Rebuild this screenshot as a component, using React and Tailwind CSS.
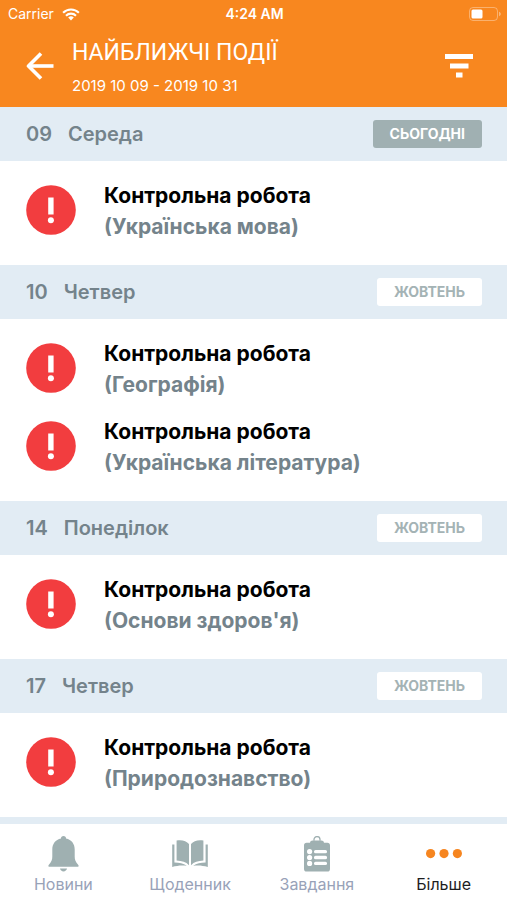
import { useState } from 'react'

const DAYS = [
  { date: '09', weekday: 'Середа', badge: 'СЬОГОДНІ', today: true, events: ['Українська мова'] },
  { date: '10', weekday: 'Четвер', badge: 'ЖОВТЕНЬ', events: ['Географія', 'Українська література'] },
  { date: '14', weekday: 'Понеділок', badge: 'ЖОВТЕНЬ', events: ["Основи здоров'я"] },
  { date: '17', weekday: 'Четвер', badge: 'ЖОВТЕНЬ', events: ['Природознавство'] },
]

const TABS = [
  { id: 'news', label: 'Новини', Icon: BellIcon },
  { id: 'diary', label: 'Щоденник', Icon: BookIcon },
  { id: 'tasks', label: 'Завдання', Icon: ClipboardIcon },
  { id: 'more', label: 'Більше', Icon: DotsIcon },
]

function WifiIcon() {
  return (
    <svg viewBox="0 0 18 13" className="h-[13px] w-[18px]" fill="none" stroke="currentColor" strokeWidth="2.1" aria-hidden="true">
      <path d="M1.1 4.7a11.3 11.3 0 0 1 15.8 0" />
      <path d="M4 7.7a7.1 7.1 0 0 1 10 0" />
      <path d="M9 12.4 6.2 9.6a4 4 0 0 1 5.6 0z" fill="currentColor" stroke="none" />
    </svg>
  )
}

function BatteryIcon() {
  return (
    <svg viewBox="0 0 32 14" className="h-[14px] w-8" aria-hidden="true">
      <rect x="0.5" y="0.5" width="28" height="13" rx="3.5" fill="none" stroke="#fff" strokeOpacity="0.35" />
      <rect x="2.5" y="2.5" width="11" height="9" rx="1.5" fill="#fff" />
      <path d="M30 4.8c1.2.4 1.8 1.2 1.8 2.2s-.6 1.8-1.8 2.2z" fill="#fff" fillOpacity="0.4" />
    </svg>
  )
}

function BackIcon() {
  return (
    <svg viewBox="0 0 28 28" className="size-7" fill="none" stroke="currentColor" strokeWidth="3.6" aria-hidden="true">
      <path d="M27.500 14H3" />
      <path d="M15 1.500 2.500 14 15 26.500" strokeLinejoin="round" />
    </svg>
  )
}

function FilterIcon() {
  return (
    <svg viewBox="0 0 28 24" className="h-6 w-7" fill="currentColor" aria-hidden="true">
      <path d="M0 0h28v5H0zM5 9.500h18.500v5H5zM11 18.500h6.500v5H11z" />
    </svg>
  )
}

function AlertIcon() {
  return (
    <svg viewBox="0 0 50 50" className="size-[50px] shrink-0" aria-hidden="true">
      <circle cx="25" cy="25" r="24.800" fill="#f23d3f" />
      <path d="M22.200 12.500h5.400v17h-5.400z" fill="#fff" />
      <circle cx="24.900" cy="35.200" r="3" fill="#fff" />
    </svg>
  )
}

function BellIcon() {
  return (
    <svg viewBox="0 0 36 36" className="size-9" fill="currentColor" aria-hidden="true">
      <path d="M18.500 0c1.500 0 2.700 1.200 2.500 2.600 5.600 1.200 8.700 5.400 8.700 11v7c0 3 .8 5.500 3.600 8.300.8 1 .2 1.800-.8 1.800H4.500c-1 0-1.600-.8-.8-1.800 2.800-2.800 3.600-5.300 3.600-8.300v-7c0-5.600 3.100-9.800 8.700-11C15.800 1.200 17 0 18.500 0z" />
      <path d="M15 32.600h7c-.4 1.700-1.700 2.900-3.500 2.900s-3.100-1.200-3.500-2.900z" />
    </svg>
  )
}

function BookIcon() {
  return (
    <svg viewBox="0 0 36 36" className="size-9" fill="currentColor" aria-hidden="true">
      <path d="M4.600 4.600c5.400-1 9.800.4 12.400 3.400v21.200c-3-3.200-7-4.300-12.400-4.600z" />
      <path d="M31.400 4.600C26 3.600 21.600 5 19 8v21.200c3-3.200 7-4.300 12.400-4.600z" />
      <path d="M.2 8.600h2.200v17.800c5 0 9 .8 12.400 3.400-4.800-.7-9.400-.4-14.600 1.200z" />
      <path d="M35.800 8.600h-2.200v17.800c-5 0-9 .8-12.400 3.400 4.800-.7 9.400-.4 14.600 1.200z" />
    </svg>
  )
}

function ClipboardIcon() {
  return (
    <svg viewBox="0 0 36 36" className="size-9" aria-hidden="true">
      <path d="M15 4.800V3.600a3 3 0 0 1 6 0v1.200" fill="none" stroke="currentColor" strokeWidth="1.300" />
      <path d="M11 6.800c.2-1.500 1.200-2.300 2.700-2.300h8.600c1.500 0 2.500.8 2.700 2.300h3.400c1.600 0 2.600 1 2.600 2.600v23.500c0 1.600-1 2.600-2.600 2.600H7.600C6 35.500 5 34.500 5 32.900V9.400c0-1.600 1-2.600 2.600-2.600z" fill="currentColor" />
      <g fill="#fff">
        <circle cx="10.600" cy="15.600" r="2.600" />
        <circle cx="10.600" cy="21.500" r="2.600" />
        <circle cx="10.600" cy="27.400" r="2.600" />
        <rect x="15" y="13.900" width="13" height="3.400" rx="1.500" />
        <rect x="15" y="19.800" width="13" height="3.400" rx="1.500" />
        <rect x="15" y="25.700" width="13" height="3.400" rx="1.500" />
      </g>
    </svg>
  )
}

function DotsIcon() {
  return (
    <svg viewBox="0 0 36 36" className="size-9" fill="#f6851f" aria-hidden="true">
      <circle cx="4.600" cy="17.600" r="4.600" />
      <circle cx="18" cy="17.600" r="4.600" />
      <circle cx="31.400" cy="17.600" r="4.600" />
    </svg>
  )
}

function StatusBar() {
  return (
    <div className="flex h-7 items-center justify-between pr-[6px] pl-2 text-sm">
      <div className="flex flex-1 items-center gap-2">
        <span>Carrier</span>
        <WifiIcon />
      </div>
      <span className="font-semibold">4:24 AM</span>
      <div className="flex flex-1 justify-end">
        <BatteryIcon />
      </div>
    </div>
  )
}

function DaySection({ day }) {
  return (
    <section>
      <div className="flex h-[54px] items-center justify-between bg-[#e2ecf4] pr-[25px] pl-[26px]">
        <h2 className="flex gap-4 text-xl font-semibold text-[#74838b]">
          <span>{day.date}</span>
          <span>{day.weekday}</span>
        </h2>
        <span
          className={`rounded-[3px] px-[17px] text-sm leading-7 font-bold ${
            day.today ? 'bg-[#a0b0b2] text-white' : 'bg-white text-[#a4b3b5]'
          }`}
        >
          {day.badge}
        </span>
      </div>
      <ul className="bg-white px-[26px] pt-[10px] pb-4">
        {day.events.map(subject => (
          <li key={subject} className="flex h-[78px] items-center gap-7">
            <AlertIcon />
            <div className="pt-[2px] text-[21px] leading-[31px] font-bold">
              <p className="text-black">Контрольна робота</p>
              <p className="text-[#74838b]">({subject})</p>
            </div>
          </li>
        ))}
      </ul>
    </section>
  )
}

export default function App() {
  const [activeTab, setActiveTab] = useState('more')

  return (
    <div className="flex h-screen flex-col bg-white font-['Inter',sans-serif]">
      <header className="bg-[#f8871f] text-white">
        <StatusBar />
        <div className="flex items-start justify-between pr-[34px] pb-[3px] pl-[26px]">
          <div className="flex items-start gap-[18px]">
            <button type="button" aria-label="Назад" className="flex h-[76px] items-center">
              <BackIcon />
            </button>
            <div className="pt-[7px]">
              <h1 className="font-['Roboto',sans-serif] text-[23px] leading-9">НАЙБЛИЖЧІ ПОДІЇ</h1>
              <p className="text-[15px] leading-[30px]">2019 10 09 - 2019 10 31</p>
            </div>
          </div>
          <button type="button" aria-label="Фільтр" className="flex h-[76px] items-center">
            <FilterIcon />
          </button>
        </div>
      </header>

      <main className="min-h-0 flex-1 overflow-y-auto bg-[#e2ecf4] [scrollbar-width:none]">
        {DAYS.map(day => (
          <DaySection key={day.date} day={day} />
        ))}
      </main>

      <nav className="grid h-[76px] grid-cols-4 bg-white">
        {TABS.map(({ id, label, Icon }) => (
          <button
            key={id}
            type="button"
            onClick={() => setActiveTab(id)}
            className="flex flex-col items-center pt-3 text-[#9fb0b1]"
          >
            <Icon />
            <span className={`text-base ${activeTab === id ? 'text-[#1d1d1f]' : 'text-[#98a2b8]'}`}>{label}</span>
          </button>
        ))}
      </nav>
    </div>
  )
}
